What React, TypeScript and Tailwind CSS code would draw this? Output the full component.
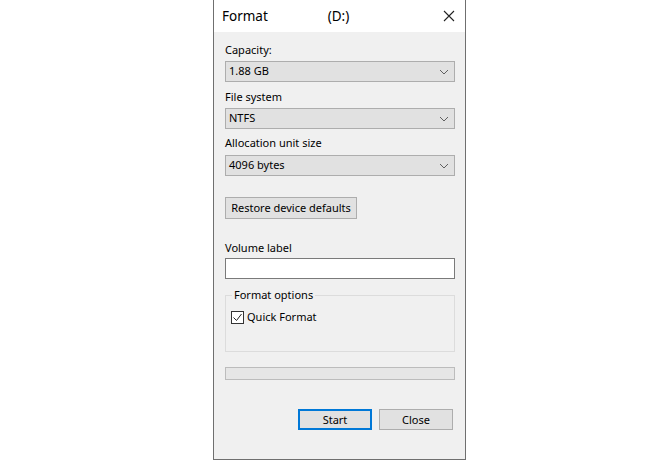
import { ReactNode } from 'react'

const font = { fontFamily: '"Noto Sans", "Open Sans", sans-serif' }

function Chevron() {
  return (
    <svg viewBox="0 0 10 6" className="h-[6px] w-[10px]" fill="none" aria-hidden>
      <path d="M1 1l4 4 4-4" stroke="#606060" strokeWidth="1" />
    </svg>
  )
}

function Select({ value }: { value: string }) {
  return (
    <div className="flex h-[21px] items-center justify-between border border-[#adadad] bg-[#e1e1e1] pl-[3px] pr-[5px]">
      <span>{value}</span>
      <Chevron />
    </div>
  )
}

function Label({ children }: { children: ReactNode }) {
  return <div className="h-[16px] leading-[16px]">{children}</div>
}

export default function App() {
  return (
    <div className="flex h-[463px] w-[670px] bg-white pl-[213px]" style={font}>
      <div className="flex h-[460px] w-[253px] flex-col border-x border-b border-[#6f6f6f] bg-[#f0f0f0] text-[11px] text-black">
        <div className="flex h-[32px] items-center bg-white pl-[8px] pr-[10px] text-[13.5px]">
          <span className="w-[100px]">Format</span>
          <span className="flex-1 text-center">(D:)</span>
          <div className="flex w-[100px] justify-end">
            <svg viewBox="0 0 12 12" className="h-[12px] w-[12px]" fill="none" aria-hidden>
              <path d="M1 1l10 10M11 1L1 11" stroke="#222" strokeWidth="1.1" />
            </svg>
          </div>
        </div>

        <div className="flex flex-col pl-[11px] pr-[10px]">
          <div className="mt-[10px]">
            <Label>Capacity:</Label>
          </div>
          <div className="mt-[3px]">
            <Select value="1.88 GB" />
          </div>
          <div className="mt-[7px]">
            <Label>File system</Label>
          </div>
          <div className="mt-[3px]">
            <Select value="NTFS" />
          </div>
          <div className="mt-[6px]">
            <Label>Allocation unit size</Label>
          </div>
          <div className="mt-[4px]">
            <Select value="4096 bytes" />
          </div>

          <div className="mt-[21px] flex">
            <button className="h-[22px] w-[132px] border border-[#adadad] bg-[#e1e1e1] leading-[20px]">
              Restore device defaults
            </button>
          </div>

          <div className="mt-[21px]">
            <Label>Volume label</Label>
          </div>
          <div className="mt-[2px] h-[21px] border border-[#7a7a7a] bg-white" />

          <div className="relative mt-[16px] h-[57px] border border-[#dcdcdc]">
            <span className="absolute left-[6px] top-[-9px] bg-[#f0f0f0] px-[2px] leading-[16px]">
              Format options
            </span>
            <div className="mt-[13px] flex items-center pl-[5px]">
              <div className="flex h-[13px] w-[13px] items-center justify-center border border-[#333] bg-white">
                <svg viewBox="0 0 11 11" className="h-[11px] w-[11px]" fill="none" aria-hidden>
                  <path d="M1.5 5.5l3 3 5-6.5" stroke="#222" strokeWidth="1" />
                </svg>
              </div>
              <span className="ml-[3px] leading-[16px]">Quick Format</span>
            </div>
          </div>

          <div className="mt-[15px] h-[13px] border border-[#bcbcbc] bg-[#e6e6e6]" />

          <div className="mt-[29px] flex justify-end gap-[7px] pr-[2px]">
            <button className="h-[21px] w-[74px] border-2 border-[#0078d7] bg-[#e1e1e1] leading-[17px]">
              Start
            </button>
            <button className="h-[21px] w-[74px] border border-[#adadad] bg-[#e1e1e1] leading-[19px]">
              Close
            </button>
          </div>
        </div>
      </div>
    </div>
  )
}
